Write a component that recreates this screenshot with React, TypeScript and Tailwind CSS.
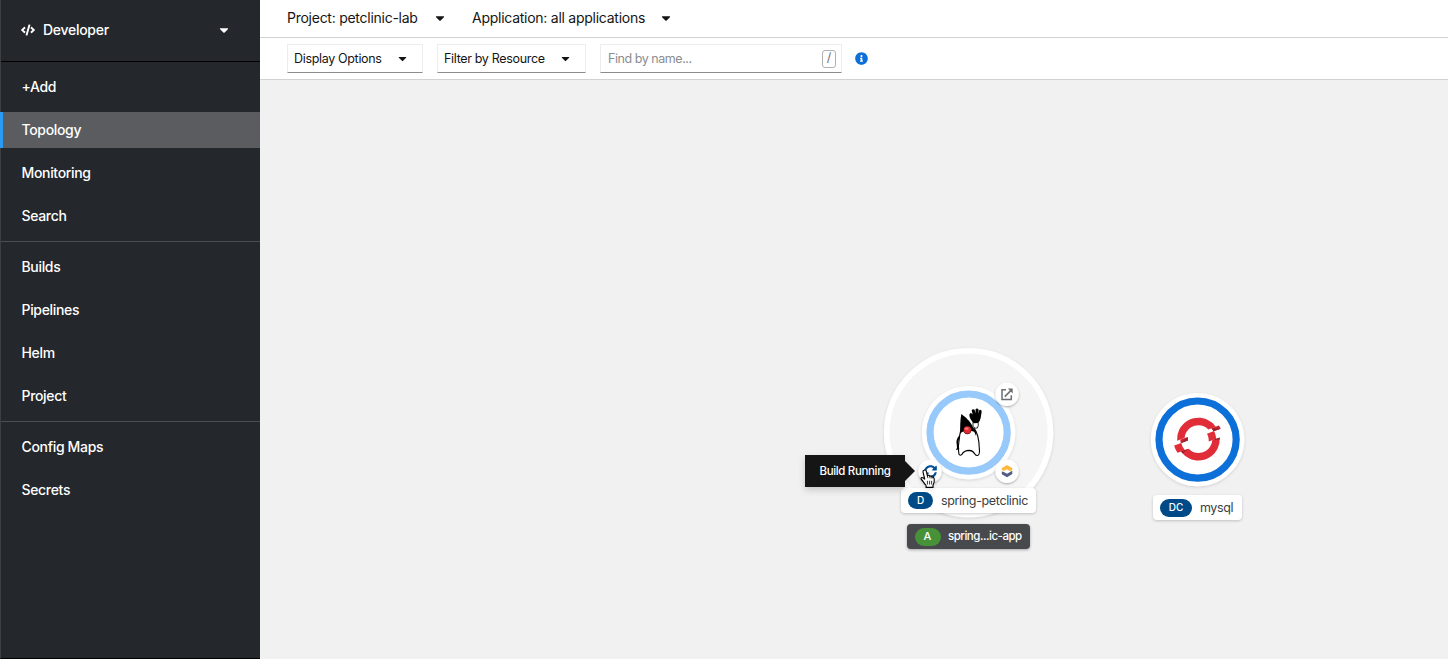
import type { ReactNode } from "react";
import { FaCaretDown, FaCode, FaInfoCircle, FaSyncAlt } from "react-icons/fa";

function NavItem({ label, active = false }: { label: string; active?: boolean }) {
  return (
    <a
      className={
        active
          ? "-ml-px mb-[7px] flex h-9 items-center border-l-[3px] border-[#2b9af3] bg-[#5a5c60] pl-[18.5px]"
          : "mb-[7px] flex h-9 items-center pl-[20.5px]"
      }
    >
      {label}
    </a>
  );
}

function NavGroup({ children }: { children: ReactNode }) {
  return <div className="border-b border-[#4a4d51] pt-[7px] last:border-b-0">{children}</div>;
}

function Select({ label, className }: { label: string; className: string }) {
  return (
    <button
      className={
        "flex h-[29px] items-center justify-between border border-[#ededed] border-b-[#8a8d90] pl-1.5 text-[12.5px] tracking-[-0.33px] text-[#151515] " +
        className
      }
    >
      <span className="pt-0.5">{label}</span>
      <FaCaretDown className="h-[13px] w-[13px]" />
    </button>
  );
}

function Duke() {
  return (
    <g transform="translate(940 400) scale(0.33333)">
      <path
        d="M62 92 C59 103 58 113 57 123 C54 137 54 151 57 163 Q60 168 65 164 Q72 151 88 151 Q99 152 104 161 Q107 168 114 166 Q120 163 118 146 C117 119 110 94 103 86 Z"
        fill="#fff"
        stroke="#000"
        strokeWidth="3.3"
      />
      <path d="M99 80 Q106 87 112 84 Q117 79 114 63 L99 63 Z" fill="#fff" stroke="#000" strokeWidth="2.5" />
      <path d="M64 42 C76 51 91 63 99 82 L105 97 C90 88 72 90 60 101 C61 82 60 60 64 42 Z" />
      <path d="M98 65 C92 59 88 52 88 44 Q91 36 96 41 L98 44 L95 31 Q98 25 104 29 L106 40 L107 27 Q112 23 116 29 L115 41 L118 30 Q125 28 125 35 L122 54 Q121 63 113 69 L101 70 Z" />
      <path d="M58 106 Q47 120 50 132 L51 143 L48 150 L58 148 L55 133 Q54 121 59 115 Z" />
      <path d="M103 86 Q112 98 108 108 L102 93 Z" />
      <circle cx="82" cy="90" r="12.5" fill="#170000" />
      <circle cx="82" cy="90" r="11" fill="#dc2a31" />
      <ellipse cx="80" cy="86" rx="6" ry="3.5" fill="#f27a7d" />
    </g>
  );
}

function OpenShiftLogo() {
  return (
    <g transform="translate(1174.2 415.9) scale(0.775)" fill="#e12d38">
      <path d="M38.802 13.776c2.004.935 3.74 2.21 5.204 3.707l9.633-3.506a27.38 27.38 0 0 0-10.756-8.95c-13.77-6.42-30.198-.442-36.62 13.326a27.38 27.38 0 0 0-2.488 13.771l9.634-3.505c.16-2.087.67-4.18 1.603-6.184 4.173-8.947 14.844-12.83 23.79-8.658z" />
      <path d="M9.153 35.01L0 38.342c.84 3.337 2.3 6.508 4.304 9.33l9.612-3.5a17.99 17.99 0 0 1-4.763-9.164z" />
      <path d="M49.074 31.38a17.64 17.64 0 0 1-1.616 6.186c-4.173 8.947-14.843 12.83-23.79 8.657a17.71 17.71 0 0 1-5.215-3.7l-9.612 3.5c2.662 3.744 6.293 6.874 10.748 8.953 13.77 6.42 30.196.44 36.618-13.328a27.28 27.28 0 0 0 2.479-13.765z" />
      <path d="M51.445 19.618l-9.153 3.332c1.7 3.046 2.503 6.553 2.24 10.08l9.612-3.497c-.275-3.45-1.195-6.817-2.7-9.915z" />
      <path d="M17.424 27.158L7.8 30.664c.123 1.545.4 3.07.764 4.566l9.15-3.333c-.297-1.547-.403-3.142-.28-4.74zM60 16.504c-.672-1.386-1.45-2.726-2.35-3.988l-9.632 3.506c1.12 1.147 2.06 2.435 2.83 3.813z" fill="#c72432" />
      <path d="M48.02 16.02L60 16.5l-9.15 3.34zM17.42 27.16L8.56 35.23l9.15-3.33zM49.07 31.38l9.61-3.5.1 2.6zM8.84 46.02l9.61-3.5-7.6 6z" fill="#9e2029" />
    </g>
  );
}

function Cursor() {
  return (
    <svg className="absolute left-[660px] top-[389px] h-[20px] w-[16px] drop-shadow-sm" viewBox="0 0 16 20">
      <path
        d="M4 1.2 Q5.8 .4 6.4 2.5 L7.4 6.8 Q9 5.6 9.8 7.3 Q11.3 6.5 12 8.1 Q13.8 7.7 14.2 10 C14.7 13 13.8 14.5 13 16.2 V18.4 H6.1 V16.5 C4.2 14.4 2.9 12 1.4 10.5 Q.4 9 1.8 8.5 Q3.2 8.4 4.8 10.3 L3 3 Q2.8 1.6 4 1.2 Z"
        fill="#fff"
        stroke="#000"
        strokeWidth="1.1"
      />
      <path d="M7.4 11.8 V15.5 M9.6 11.8 V15.5 M11.6 11.8 V15.5 M7.4 6.8 L7.9 9.2 M9.8 7.4 L10.1 9.3 M12 8.2 V9.6" stroke="#000" strokeWidth=".8" fill="none" />
    </svg>
  );
}

function Canvas() {
  return (
    <main className="relative flex-1 overflow-hidden bg-[#f1f1f1]">
      <svg className="absolute left-0 top-0" width="1188" height="579" viewBox="260 80 1188 579">
        <defs>
          <filter id="shadow" x="-20%" y="-20%" width="140%" height="140%">
            <feDropShadow dx="0" dy="1" stdDeviation="1.4" floodColor="#000" floodOpacity="0.14" />
          </filter>
          <filter id="badge" x="-30%" y="-30%" width="160%" height="160%">
            <feDropShadow dx="0" dy="1" stdDeviation="1.2" floodColor="#000" floodOpacity="0.35" />
          </filter>
        </defs>
        <circle cx="968.6" cy="432.6" r="84.7" fill="#fff" filter="url(#shadow)" />
        <circle cx="968.6" cy="432.6" r="79" fill="#f5f5f5" />
        <circle cx="968.6" cy="432.6" r="46.7" fill="#fff" filter="url(#shadow)" />
        <circle cx="968.6" cy="432.6" r="38.6" fill="#fff" stroke="#98c9fb" strokeWidth="7.2" />
        <Duke />
        <circle cx="1197.6" cy="439.6" r="46.7" fill="#fff" filter="url(#shadow)" />
        <circle cx="1197.6" cy="439.6" r="38.6" fill="#fff" stroke="#0d6fd8" strokeWidth="7.2" />
        <OpenShiftLogo />
        <g fill="#fff" filter="url(#badge)">
          <circle cx="1007" cy="394.3" r="11.7" />
          <circle cx="1007" cy="471.2" r="11.7" />
          <circle cx="930" cy="471.2" r="11.7" />
        </g>
        <g fill="none" stroke="#6a6e73" strokeWidth="1.5">
          <path d="M1006 389.8 H1002 V399.4 H1011.3 V395.3" />
          <path d="M1004.8 396.6 L1011 390.4" />
          <path d="M1007.9 388.6 H1012.7 V393.4 Z" fill="#6a6e73" stroke="none" />
        </g>
        <path d="M1001.8 469.8 V468 L1007 465.1 L1012.3 468 V470 L1010.2 471.2 L1007 469.3 L1003.8 471 Z" fill="#fdb940" />
        <path d="M1001.8 471.4 L1003.8 472 L1007 473.7 L1012.3 470.8 V474 L1007 477.2 L1001.8 474.2 Z" fill="#525c86" />
      </svg>
      <FaSyncAlt className="absolute left-[664px] top-[385px] h-[13px] w-[13px] text-[#004b95]" />
      <div className="absolute left-[641px] top-[408px] flex h-[25px] w-[135px] items-center whitespace-nowrap rounded bg-white pl-[7px] text-[12.5px] text-[#3c3f42] shadow-[0_1px_3px_rgba(0,0,0,0.2)]">
        <span className="flex h-[17px] w-[25px] items-center justify-center rounded-full bg-[#004b87] text-[10px] font-medium text-white">D</span>
        <span className="ml-2 pt-0.5 tracking-[-0.35px]">spring-petclinic</span>
      </div>
      <div className="absolute left-[647px] top-[444px] flex h-[25px] w-[123px] items-center whitespace-nowrap rounded bg-[#47494d] pl-[7.5px] text-[11.5px] font-medium text-white shadow-[0_1px_3px_rgba(0,0,0,0.3)]">
        <span className="flex h-[18px] w-[26px] items-center justify-center rounded-full bg-[#479238] text-[11px]">A</span>
        <span className="ml-[7.5px] tracking-[-0.48px]">spring...ic-app</span>
      </div>
      <div className="absolute left-[893px] top-[415px] flex h-[25px] w-[89px] items-center whitespace-nowrap rounded bg-white pl-[7px] text-[12.5px] text-[#3c3f42] shadow-[0_1px_3px_rgba(0,0,0,0.2)]">
        <span className="flex h-[18px] w-[32px] items-center justify-center rounded-full bg-[#004b87] text-[10px] font-medium text-white">DC</span>
        <span className="ml-2 pt-0.5 tracking-[-0.4px]">mysql</span>
      </div>
      <div className="absolute left-[545px] top-[375px] flex h-8 w-[100px] items-center justify-center bg-[#151515] pt-0.5 text-[11.5px] font-medium tracking-[-0.35px] text-white shadow-[0_3px_7px_rgba(0,0,0,0.18)]">
        Build Running
        <svg className="absolute left-full top-[6px]" width="10" height="20" viewBox="0 0 10 20">
          <path d="M0 0 L10 10 L0 20 Z" fill="#151515" />
        </svg>
      </div>
      <Cursor />
    </main>
  );
}

export default function App() {
  return (
    <div className="flex h-[659px] w-[1448px] overflow-hidden bg-white font-['Inter','Noto_Sans',sans-serif]">
      <aside className="flex w-[260px] shrink-0 flex-col border-b border-l border-b-black border-l-[#3c3f42] bg-[#24272b] text-sm font-medium tracking-[-0.33px] text-white">
        <button className="flex h-[62px] shrink-0 items-center border-b border-black pb-px pl-5">
          <FaCode className="h-3.5 w-3.5" />
          <span className="ml-2 tracking-[-0.28px]">Developer</span>
          <FaCaretDown className="ml-auto mr-[29px] h-3.5 w-3.5" />
        </button>
        <nav>
          <NavGroup>
            <NavItem label="+Add" />
            <NavItem label="Topology" active />
            <NavItem label="Monitoring" />
            <NavItem label="Search" />
          </NavGroup>
          <NavGroup>
            <NavItem label="Builds" />
            <NavItem label="Pipelines" />
            <NavItem label="Helm" />
            <NavItem label="Project" />
          </NavGroup>
          <NavGroup>
            <NavItem label="Config Maps" />
            <NavItem label="Secrets" />
          </NavGroup>
        </nav>
      </aside>
      <div className="flex min-w-0 flex-1 flex-col">
        <header className="flex h-[38px] shrink-0 items-center border-b border-[#d2d2d2] pb-px pl-[27px] text-sm tracking-[-0.26px] text-[#151515]">
          <span className="w-[146px]">Project: petclinic-lab</span>
          <FaCaretDown className="h-3.5 w-3.5" />
          <span className="ml-[25px] w-[187px]">Application: all applications</span>
          <FaCaretDown className="h-3.5 w-3.5" />
        </header>
        <div className="flex h-[42px] shrink-0 items-center border-b border-[#d2d2d2] pl-[27px]">
          <Select label="Display Options" className="w-[136px] pr-[13px]" />
          <Select label="Filter by Resource" className="ml-3.5 w-[149px] pr-[13px]" />
          <div className="ml-3.5 flex h-[29px] w-[242px] items-center justify-between border border-[#ededed] border-b-[#8a8d90] pl-[7px] pr-[5px] text-[12.5px] text-[#8a8d90]">
            <span className="pt-0.5 tracking-[-0.45px]">Find by name...</span>
            <span className="flex h-[18px] w-3.5 items-center justify-center rounded-[3px] border border-[#b0b0b0] text-[#6a6e73]">/</span>
          </div>
          <FaInfoCircle className="ml-[13px] h-[13px] w-[13px] text-[#0d6fd8]" />
        </div>
        <Canvas />
      </div>
    </div>
  );
}
